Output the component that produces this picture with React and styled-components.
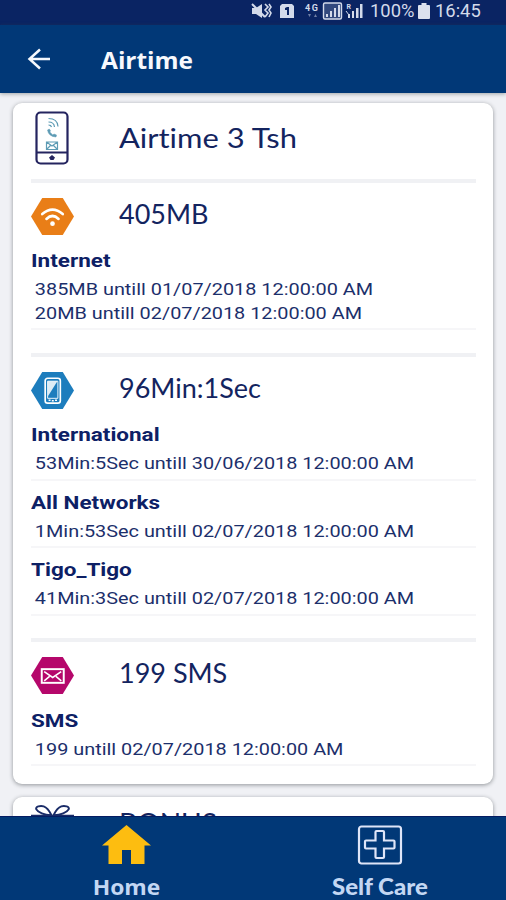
import React from 'react';
import styled, { createGlobalStyle } from 'styled-components';

const GlobalStyle = createGlobalStyle`
  * {
    box-sizing: border-box;
  }

  body {
    margin: 0;
    background: #f0f1f5;
    font-family: Roboto, sans-serif;
  }
`;

const Screen = styled.div`
  display: flex;
  flex-direction: column;
  width: 506px;
  height: 900px;
  overflow: hidden;
  background: #f0f1f5;
`;

const StatusBar = styled.div`
  display: flex;
  flex: none;
  align-items: center;
  justify-content: flex-end;
  height: 25px;
  padding: 0 25px 4px 0;
  background: #0a2463;
  color: #d3daea;
`;

const StatusText = styled.span`
  width: ${(props) => props.$width}px;
  font-size: 18px;
  line-height: 20px;
  white-space: nowrap;
  transform: scaleX(${(props) => props.$stretch});
  transform-origin: left;
`;

const Battery = styled.svg`
  margin-right: 5px;
  fill: #dbe1ee;
`;

const Header = styled.header`
  display: flex;
  flex: none;
  align-items: center;
  height: 68px;
  padding-left: 27px;
  background: #013877;
  box-shadow: 0 1px 4px rgba(60, 70, 70, 0.45);
  z-index: 1;
`;

const HeaderTitle = styled.h1`
  margin: 1px 0 0 50px;
  color: #f7f9fd;
  font-family: 'Open Sans', sans-serif;
  font-size: 24px;
  font-weight: 700;
  line-height: 30px;
  transform: scaleX(1.02);
  transform-origin: left;
`;

const Content = styled.main`
  display: flex;
  flex: 1;
  flex-direction: column;
  gap: 13px;
  min-height: 0;
  padding: 10px 13px 0;
  overflow: hidden;
`;

const Card = styled.section`
  flex: none;
  padding: 0 17px 18px 18px;
  border-radius: 9px;
  background: #fff;
  box-shadow: 0 1px 4px rgba(40, 45, 50, 0.48);
`;

const CardHead = styled.div`
  display: flex;
  align-items: flex-start;
  height: ${(props) => props.$height}px;
  padding-top: ${(props) => props.$top}px;
`;

const IconBox = styled.div`
  display: flex;
  flex: none;
  justify-content: center;
  width: 43px;
  margin-right: 45px;
`;

const Title = styled.h2`
  margin: ${(props) => props.$top || 0}px 0 0;
  color: #13245f;
  font-family: Lato, sans-serif;
  font-size: 27px;
  font-weight: 400;
  font-variant-ligatures: none;
  line-height: 32px;
  white-space: nowrap;
  transform: scaleX(${(props) => props.$stretch || 1});
  transform-origin: left;
`;

const Block = styled.div`
  padding-bottom: ${(props) => (props.$last ? 0 : 22.5)}px;
  border-top: 4px solid #f0f1f4;
`;

const Group = styled.div`
  padding: 10px 0 3px;
  border-bottom: 2px solid #f6f6f8;
`;

const GroupName = styled.h3`
  margin: 0 0 5px;
  color: #0d2065;
  font-size: 18.5px;
  font-weight: 700;
  line-height: 24px;
  white-space: nowrap;
  transform: scaleX(1.215);
  transform-origin: left;
`;

const Detail = styled.p`
  margin: 0;
  padding-left: 3.3px;
  color: #1c2f6b;
  font-size: 17px;
  line-height: 23.5px;
  white-space: nowrap;
  transform: scaleX(1.168);
  transform-origin: left;
`;

const BottomNav = styled.nav`
  display: grid;
  flex: none;
  grid-template-columns: 1fr 1fr;
  height: 84px;
  border-top: 1px solid #041c62;
  background: #013877;
  z-index: 1;
`;

const NavItem = styled.a`
  display: flex;
  flex-direction: column;
  align-items: center;
  padding-top: 8px;
  color: #c3d7f3;
`;

const NavLabel = styled.span`
  margin-top: 9px;
  font-family: ${(props) => props.$font};
  font-size: 22px;
  font-weight: ${(props) => props.$weight};
  line-height: 25px;
  white-space: nowrap;
  transform: scaleX(${(props) => props.$stretch});
`;

const StatusIcons = () => (
  <svg width="119" height="20" viewBox="0 0 119 20" fill="currentColor">
    <path d="M1 7h4l6-4v14l-6-4H1z" />
    <path d="M1 3l13 13" stroke="currentColor" strokeWidth="2" />
    <path d="M14 3l3 3-3 3 3 3-3 4M18 3l2 3-2 3 2 3-2 4" fill="none" stroke="currentColor" strokeWidth="1.600" />
    <path fillRule="evenodd" d="M31 3h10l2 2v12H29V5zM34 7v2h2v5h2V6h-2z" />
    <text x="54" y="10" fontSize="9" fontWeight="700" fontFamily="Roboto, sans-serif" textLength="13">4G</text>
    <path d="M57 13h3l-1.500 3zM63 16h3l-1.500-3z" opacity=".5" />
    <rect x="72.500" y="2" width="18" height="16" rx="1.500" fill="#7f8fb2" fillOpacity=".35" stroke="currentColor" strokeWidth="1.400" />
    <path d="M75 13h2v3h-2zM79 10h2v6h-2zM83 7h2v9h-2zM87 4h2v12h-2z" />
    <path d="M97 13h2v4h-2zM101 10h2v7h-2zM105 7h2.500v10H105zM109 3h2.500v14H109z" />
    <text x="95.500" y="8" fontSize="7" fontWeight="700" fontFamily="Roboto, sans-serif">R</text>
    <path d="M95 10l3 4" stroke="currentColor" strokeWidth="1" />
  </svg>
);

const BackIcon = () => (
  <svg width="24" height="22" viewBox="0 0 24 22" fill="none" stroke="#f5f8fd" strokeWidth="2.500">
    <path d="M23 11H3M13 1.500L2.500 11 13 20.500" />
  </svg>
);

const PhoneIcon = () => (
  <svg width="35" height="54" viewBox="0 0 35 54" fill="none">
    <rect x="1.500" y="1.500" width="31" height="51" rx="4" stroke="#24245f" strokeWidth="2.200" />
    <path d="M2 41.500h30" stroke="#24245f" strokeWidth="2" />
    <path d="M17 44l3 2.500-1.500 2.500h-3L14 46.500z" fill="#24245f" />
    <g stroke="#5d9bb4" strokeWidth="1.200">
      <path d="M13.500 7.500q9 0 9.500 8M13.500 11q5.500 0 6 5M13.500 14q2.500 0 3 2" />
      <path d="M12.500 19q1 6.500 8.500 7l.5-2-2.500-1-1.200 1-3-3 .7-1.200-1.200-1.800z" fill="#5d9bb4" strokeWidth=".5" />
      <path d="M11.500 31h11v7.500h-11zM11.500 31l5.500 4 5.500-4M11.500 38.500l4-4M22.500 38.500l-4-4" />
    </g>
  </svg>
);

const HexIcon = ({ color, children }) => (
  <svg width="44" height="39" viewBox="0 0 44 39" fill="none">
    <path d="M11.500 .5h21L44 19.500l-11.500 19h-21L0 19.500z" fill={color} />
    {children}
  </svg>
);

const WifiGlyph = () => (
  <g stroke="#fff" strokeLinecap="round">
    <path d="M11.500 17q10.500-9 21 0" strokeWidth="2.700" />
    <path d="M15.800 22q6.200-6 12.400 0" strokeWidth="2.700" />
    <circle cx="22" cy="26.800" r="2.400" fill="#fff" stroke="none" />
  </g>
);

const MobileGlyph = () => (
  <g>
    <rect x="14.500" y="7" width="15.500" height="25.500" rx="2.500" stroke="#fff" strokeWidth="1.700" />
    <path d="M17 10h10.500v17.500H17z" stroke="#eef8fd" strokeWidth="1" />
    <path d="M17 10h10L17.500 25z" fill="#fff" fillOpacity=".85" />
    <path d="M18 29.500h2M21.300 30h2M24.600 29.500h2" stroke="#fff" strokeWidth="1.400" />
  </g>
);

const MailGlyph = () => (
  <g stroke="#fff">
    <rect x="11" y="13" width="22.500" height="14" strokeWidth="2" />
    <path d="M13.500 15.500l8.700 6 8.700-6M13.500 25l5.500-4.500M31 25l-5.500-4.500" strokeWidth="1.600" />
  </g>
);

const GiftIcon = () => (
  <svg width="44" height="40" viewBox="0 0 44 40" fill="none" stroke="#1a2c68" strokeWidth="2">
    <path d="M20 10C14 10 7 7 5.500 4S10 0 13 1s6 5 8 9M24 10c6 0 13-3 14.500-6S34 0 31 1s-6 5-8 9" />
    <path d="M0 10.500h44v8H0zM5 19v19h34V19M22 11v27" />
  </svg>
);

const HomeIcon = () => (
  <svg width="50" height="40" viewBox="0 0 50 40" fill="#fdbd10">
    <path d="M24.500 0L49 20.500H42.500V39H29V25h-9v14H6.500V20.500H0z" />
  </svg>
);

const CareIcon = () => (
  <svg width="46" height="40" viewBox="0 0 46 40" fill="none" stroke="#dfe5f8" strokeWidth="2.200">
    <rect x="2" y="1.500" width="42" height="37" rx="2.500" />
    <path d="M18.500 7q0-1 1-1h6.500q1 0 1 1v8.500h9.500q1 0 1 1v6q0 1-1 1H27V32q0 1-1 1h-6.500q-1 0-1-1v-8.500H9q-1 0-1-1v-6q0-1 1-1h9.500z" />
  </svg>
);

const blocks = [
  {
    title: '405MB',
    color: '#e97e17',
    glyph: <WifiGlyph />,
    groups: [
      {
        name: 'Internet',
        details: ['385MB untill 01/07/2018 12:00:00 AM', '20MB untill 02/07/2018 12:00:00 AM'],
      },
    ],
  },
  {
    title: '96Min:1Sec',
    color: '#1d7dbd',
    glyph: <MobileGlyph />,
    groups: [
      { name: 'International', details: ['53Min:5Sec untill 30/06/2018 12:00:00 AM'] },
      { name: 'All Networks', details: ['1Min:53Sec untill 02/07/2018 12:00:00 AM'] },
      { name: 'Tigo_Tigo', details: ['41Min:3Sec untill 02/07/2018 12:00:00 AM'] },
    ],
  },
  {
    title: '199 SMS',
    color: '#b5076b',
    glyph: <MailGlyph />,
    groups: [{ name: 'SMS', details: ['199 untill 02/07/2018 12:00:00 AM'] }],
  },
];

function BalanceBlock({ block, last }) {
  return (
    <Block $last={last}>
      <CardHead $height={56.5} $top={14}>
        <IconBox>
          <HexIcon color={block.color}>{block.glyph}</HexIcon>
        </IconBox>
        <Title $top={1}>{block.title}</Title>
      </CardHead>
      {block.groups.map((group) => (
        <Group key={group.name}>
          <GroupName>{group.name}</GroupName>
          {group.details.map((detail) => (
            <Detail key={detail}>{detail}</Detail>
          ))}
        </Group>
      ))}
    </Block>
  );
}

function App() {
  return (
    <Screen>
      <GlobalStyle />
      <StatusBar>
        <StatusIcons />
        <StatusText $width={48} $stretch={1.02}>100%</StatusText>
        <Battery width="12" height="18" viewBox="0 0 12 18">
          <path d="M3.500 1h5v2H11q1 0 1 1v12q0 1-1 1H1q-1 0-1-1V4q0-1 1-1h2.500z" />
        </Battery>
        <StatusText $width={46} $stretch={1.02}>16:45</StatusText>
      </StatusBar>
      <Header>
        <BackIcon />
        <HeaderTitle>Airtime</HeaderTitle>
      </Header>
      <Content>
        <Card>
          <CardHead $height={75.5} $top={8}>
            <IconBox>
              <PhoneIcon />
            </IconBox>
            <Title $top={11} $stretch={1.145}>Airtime 3 Tsh</Title>
          </CardHead>
          {blocks.map((block, index) => (
            <BalanceBlock key={block.title} block={block} last={index === blocks.length - 1} />
          ))}
        </Card>
        <Card>
          <CardHead $height={70} $top={8}>
            <IconBox>
              <GiftIcon />
            </IconBox>
            <Title $top={1.5} $stretch={1.04}>BONUS</Title>
          </CardHead>
        </Card>
      </Content>
      <BottomNav>
        <NavItem>
          <HomeIcon />
          <NavLabel $font="'Open Sans', sans-serif" $weight={700} $stretch={1.04}>Home</NavLabel>
        </NavItem>
        <NavItem>
          <CareIcon />
          <NavLabel $font="Lato, sans-serif" $weight={900} $stretch={1.09}>Self Care</NavLabel>
        </NavItem>
      </BottomNav>
    </Screen>
  );
}

export default App;
